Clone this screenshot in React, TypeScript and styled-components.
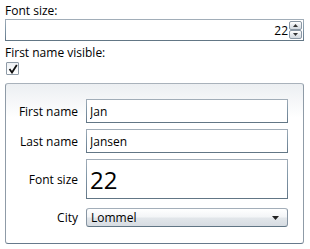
import React from 'react';
import styled, { createGlobalStyle } from 'styled-components';

const GlobalStyle = createGlobalStyle`
    body {
        margin: 0;
        background: #ffffff;
        font-family: 'Open Sans', 'Liberation Sans', sans-serif;
        font-size: 12px;
        color: #000000;
    }
`;

const Page = styled.div`
    display: flex;
    flex-direction: column;
    width: 310px;
    padding: 3px 6px 0 5px;
    box-sizing: border-box;
`;

const FieldLabel = styled.div`
    line-height: 16px;
    height: 16px;
    margin-top: ${props => props.$gap || 0}px;
`;

const boxBorder = `
    border: 1px solid transparent;
    border-image: linear-gradient(#a3aeb9, #8399a9 40%, #718597 75%, #617584) 1;
`;

const NumericBox = styled.div`
    display: flex;
    align-items: center;
    height: 22px;
    box-sizing: border-box;
    background: #ffffff;
    ${boxBorder}
`;

const NumericValue = styled.input`
    flex: 1;
    min-width: 0;
    border: none;
    outline: none;
    background: transparent;
    padding: 0 1px 0 0;
    text-align: right;
    font-family: inherit;
    font-size: 12px;
    color: #000;
`;

const Spinner = styled.div`
    display: flex;
    flex-direction: column;
    gap: 0;
    margin-right: 1px;
`;

const SpinButton = styled.div`
    display: flex;
    align-items: center;
    justify-content: center;
    width: 13px;
    height: 9px;
    box-sizing: border-box;
    border: 1px solid #8a97a4;
    border-radius: 2px;
    background: linear-gradient(#ffffff, #e6eaee 50%, #d3d9df);
`;

const CheckBox = styled.div`
    width: 13px;
    height: 13px;
    margin: 1px 0 0 1px;
    box-sizing: border-box;
    border: 1px solid #8e9aa6;
    border-radius: 1px;
    background: linear-gradient(#eef1f4, #ffffff);
    display: flex;
    align-items: center;
    justify-content: center;
`;

const GroupBox = styled.div`
    display: grid;
    grid-template-columns: 72px 1fr;
    grid-auto-rows: min-content;
    column-gap: 8px;
    row-gap: 6px;
    margin-top: 8px;
    height: 161px;
    padding: 15px 15px 0 0;
    box-sizing: border-box;
    border: 1px solid #8f9ba7;
    border-top-color: #a9b2bb;
    border-bottom-color: #66798b;
    border-radius: 3px;
    background: linear-gradient(#eceff2, #ffffff 34px);
`;

const RowLabel = styled.label`
    align-self: center;
    text-align: right;
    white-space: nowrap;
`;

const TextInput = styled.input`
    height: ${props => props.$height}px;
    width: 100%;
    box-sizing: border-box;
    padding: 0 3px;
    margin: 0;
    outline: none;
    background: #ffffff;
    font-family: inherit;
    font-size: ${props => props.$size}px;
    color: #000;
    ${boxBorder}
`;

const Combo = styled.div`
    align-self: center;
    display: flex;
    align-items: center;
    justify-content: space-between;
    height: 19px;
    margin: 3px 0;
    padding: 0 8px 0 4px;
    box-sizing: border-box;
    border: 1px solid #8795a3;
    border-top-color: #a3aeb9;
    border-bottom-color: #617584;
    border-radius: 3px;
    background: linear-gradient(#ffffff, #f3f5f7 45%, #e2e6ea 55%, #d6dce2);
`;

const Arrow = () => (
    <svg width="7" height="4" viewBox="0 0 7 4">
        <path d="M0 0 H7 L3.5 4 Z" fill="#222" />
    </svg>
);

export default function App() {
    return (
        <>
            <GlobalStyle />
            <Page>
                <FieldLabel>Font size:</FieldLabel>
                <NumericBox>
                    <NumericValue defaultValue="22" />
                    <Spinner>
                        <SpinButton>
                            <svg width="5" height="3" viewBox="0 0 5 3"><path d="M0 3 H5 L2.5 0 Z" fill="#333" /></svg>
                        </SpinButton>
                        <SpinButton>
                            <svg width="5" height="3" viewBox="0 0 5 3"><path d="M0 0 H5 L2.5 3 Z" fill="#333" /></svg>
                        </SpinButton>
                    </Spinner>
                </NumericBox>
                <FieldLabel $gap={4}>First name visible:</FieldLabel>
                <CheckBox>
                    <svg width="10" height="10" viewBox="0 0 10 10">
                        <path d="M1.5 5 L4 8.5 L8.8 1" fill="none" stroke="#111" strokeWidth="1.8" />
                    </svg>
                </CheckBox>
                <GroupBox>
                    <RowLabel>First name</RowLabel>
                    <TextInput $height={24} $size={12} defaultValue="Jan" />
                    <RowLabel>Last name</RowLabel>
                    <TextInput $height={24} $size={12} defaultValue="Jansen" />
                    <RowLabel>Font size</RowLabel>
                    <TextInput $height={40} $size={24} defaultValue="22" />
                    <RowLabel>City</RowLabel>
                    <Combo>
                        <span>Lommel</span>
                        <Arrow />
                    </Combo>
                </GroupBox>
            </Page>
        </>
    );
}
